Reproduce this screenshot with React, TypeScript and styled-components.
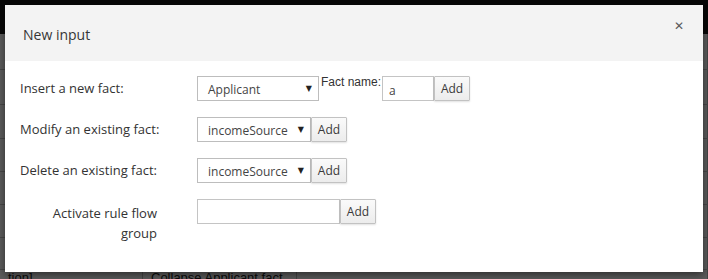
import styled, { createGlobalStyle } from "styled-components";

const GlobalStyle = createGlobalStyle`
    html, body {
        margin: 0;
        padding: 0;
        width: 708px;
        height: 279px;
        overflow: hidden;
        background: #ffffff;
        font-family: "Open Sans", "Noto Sans", sans-serif;
    }
`;

const Page = styled.div`
    position: relative;
    width: 708px;
    height: 279px;
    overflow: hidden;
`;

const TopBar = styled.div`
    height: 34px;
    background: #141414;
`;

const Table = styled.div`
    display: flex;
    flex-direction: column;
`;

const Row = styled.div<{ $h: number }>`
    height: ${p => p.$h}px;
    display: grid;
    grid-template-columns: 143px 154px 1fr;
    border-bottom: 1px solid #c8c8c8;
    font-family: "Liberation Sans", Arial, sans-serif;
    font-size: 13px;
    color: #222;
`;

const Cell = styled.div`
    border-right: 1px solid #c0c0c0;
    padding: 0 0 0 8px;
    white-space: nowrap;
    overflow: hidden;
    line-height: 16px;
`;

const Backdrop = styled.div`
    position: absolute;
    inset: 0;
    background: rgba(0, 0, 0, 0.64);
`;

const Modal = styled.div`
    position: absolute;
    left: 5px;
    top: 5px;
    width: 698px;
    height: 267px;
    background: #ffffff;
    box-shadow: 0 3px 8px rgba(0, 0, 0, 0.5);
    display: flex;
    flex-direction: column;
`;

const Header = styled.div`
    height: 56px;
    background: #f3f3f3;
    display: flex;
    align-items: center;
    justify-content: space-between;
    padding: 0 19px 0 18px;
    box-sizing: border-box;
`;

const Title = styled.h4`
    margin: 0;
    margin-top: 2px;
    font-size: 14px;
    font-weight: 400;
    color: #363636;
`;

const Close = styled.span`
    font-family: "DejaVu Sans", sans-serif;
    font-size: 12px;
    font-weight: 700;
    color: #5a5a5a;
    margin-top: -14px;
`;

const Body = styled.div`
    padding: 15px 0 0 15px;
    display: grid;
    grid-template-columns: 177px 1fr;
    row-gap: 16px;
    align-items: start;
`;

const Label = styled.div<{ $right?: boolean }>`
    font-size: 13px;
    color: #333;
    line-height: 25px;
    ${p => p.$right && "width: 137px; text-align: right; line-height: 20px; margin-top: 4px;"}
`;

const Controls = styled.div`
    display: flex;
    align-items: flex-start;
`;

const Select = styled.div<{ $w: number }>`
    width: ${p => p.$w}px;
    height: 25px;
    box-sizing: border-box;
    border: 1px solid #bdbdbd;
    background: #fff;
    display: flex;
    align-items: center;
    justify-content: space-between;
    padding: 1px 6px 0 10px;
    font-size: 12px;
    color: #444;
`;

const Caret = styled.span`
    font-family: "DejaVu Sans", sans-serif;
    font-size: 8px;
    color: #222;
    margin-top: -2px;
`;

const Input = styled.div<{ $w: number }>`
    width: ${p => p.$w}px;
    height: 25px;
    box-sizing: border-box;
    border: 1px solid #c4c4c4;
    background: #fff;
    display: flex;
    align-items: center;
    padding: 3px 0 0 6px;
    font-size: 12px;
    color: #444;
`;

const Button = styled.div`
    width: 36px;
    height: 25px;
    box-sizing: border-box;
    border: 1px solid #c2c2c2;
    border-radius: 1px;
    background: linear-gradient(#fafafa, #ececec);
    box-shadow: 0 1px 2px rgba(0, 0, 0, 0.12);
    display: flex;
    align-items: center;
    justify-content: center;
    font-size: 12px;
    color: #3a3a3a;
`;

const SmallLabel = styled.span`
    font-family: "Liberation Sans", Arial, sans-serif;
    font-size: 12px;
    color: #333;
    margin: 0 1px 0 2px;
    line-height: 13px;
`;

function App() {
    return (
        <Page>
            <GlobalStyle />
            <TopBar />
            <Table>
                <Row $h={35}><Cell>Co</Cell><Cell /><Cell /></Row>
                <Row $h={34}><Cell>a</Cell><Cell /><Cell /></Row>
                <Row $h={33}><Cell /><Cell /><Cell /></Row>
                <Row $h={32}><Cell /><Cell /><Cell /></Row>
                <Row $h={32}><Cell /><Cell /><Cell /></Row>
                <Row $h={32}><Cell /><Cell /><Cell /></Row>
                <Row $h={31}><Cell /><Cell /><Cell /></Row>
                <Row $h={30}><Cell>tion]</Cell><Cell>Collapse Applicant fact</Cell><Cell /></Row>
            </Table>
            <Backdrop />
            <Modal>
                <Header>
                    <Title>New input</Title>
                    <Close>✕</Close>
                </Header>
                <Body>
                    <Label>Insert a new fact:</Label>
                    <Controls>
                        <Select $w={122}>Applicant<Caret>▼</Caret></Select>
                        <SmallLabel>Fact name:</SmallLabel>
                        <Input $w={52}>a</Input>
                        <Button>Add</Button>
                    </Controls>

                    <Label>Modify an existing fact:</Label>
                    <Controls>
                        <Select $w={114}>incomeSource<Caret>▼</Caret></Select>
                        <Button>Add</Button>
                    </Controls>

                    <Label>Delete an existing fact:</Label>
                    <Controls>
                        <Select $w={114}>incomeSource<Caret>▼</Caret></Select>
                        <Button>Add</Button>
                    </Controls>

                    <Label $right>Activate rule flow group</Label>
                    <Controls>
                        <Input $w={143} />
                        <Button>Add</Button>
                    </Controls>
                </Body>
            </Modal>
        </Page>
    );
}

export default App;
